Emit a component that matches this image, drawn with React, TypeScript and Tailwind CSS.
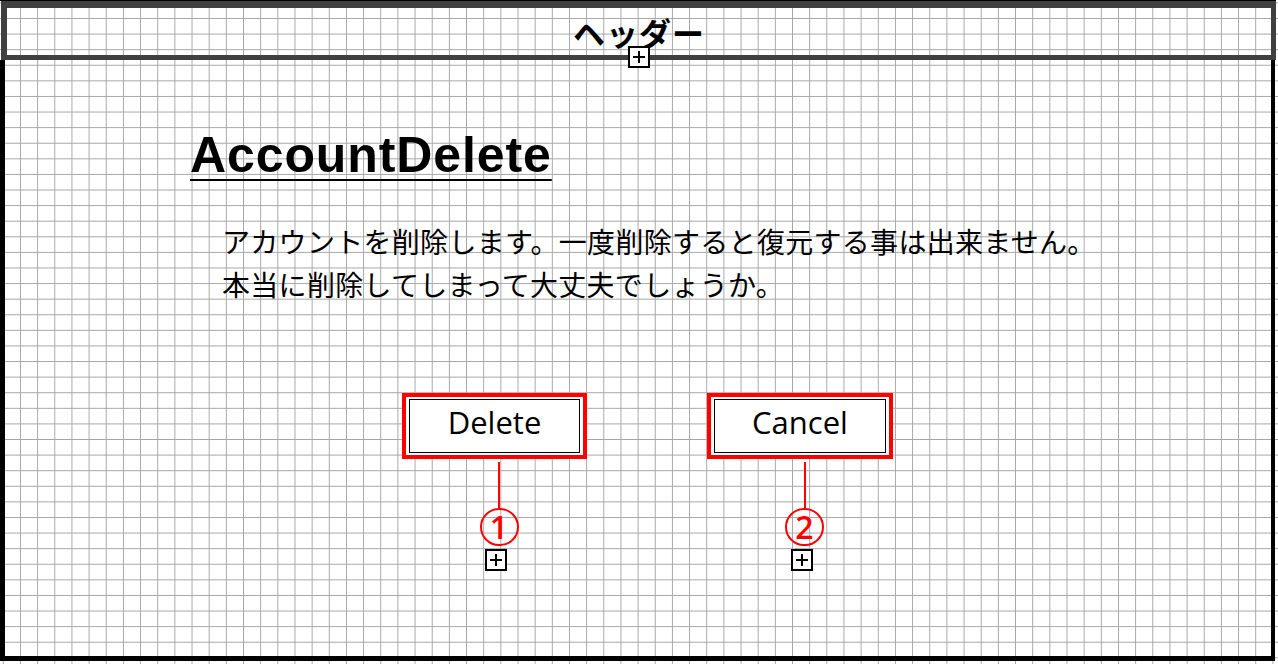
import React from 'react';

const PlusBox: React.FC<{ className?: string }> = ({ className = '' }) => (
  <div className={`w-[22px] h-[22px] border-2 border-black bg-white flex items-center justify-center ${className}`}>
    <svg width="14" height="14" viewBox="0 0 14 14">
      <path d="M7 1v12M1 7h12" stroke="#000" strokeWidth="2" />
    </svg>
  </div>
);

const ActionButton: React.FC<{ label: string; num: string; width: string }> = ({ label, num, width }) => (
  <div className="flex flex-col items-center">
    <div className={`${width} h-[66px] border-4 border-[#ff0000] bg-white px-[3px] py-[2px]`}>
      <div className="h-full border border-black flex items-center justify-center pb-[7px]">
        <span className="text-[31px] text-black font-['Open_Sans',sans-serif]">{label}</span>
      </div>
    </div>
    <div className="flex flex-col items-center ml-[9px]">
      <div className="mt-[3px] w-[2px] h-[46px] bg-[#ff0000]" />
      <div className="w-[39px] h-[38px] rounded-full border-2 border-[#ff0000] flex items-center justify-center">
        <span className="text-[32px] leading-none font-semibold text-[#ff0000] font-['Open_Sans',sans-serif]">{num}</span>
      </div>
    </div>
    <PlusBox className="mt-[3px] ml-[3px]" />
  </div>
);

export default function App() {
  return (
    <div className="relative w-[1278px] h-[664px] overflow-hidden bg-white bg-[linear-gradient(to_right,#a6a6a6_1px,transparent_1px),linear-gradient(to_bottom,#a6a6a6_1px,transparent_1px)] bg-size-[17.167px_15.6px] bg-position-[2.83px_2.4px] font-['Noto_Sans_CJK_JP',sans-serif]">
      <div className="h-px w-[1276px] bg-black" />
      <header className="ml-[1px] w-[1275px] h-[59px] border-t-[7px] border-b-[5px] border-l-[6px] border-r-[5px] border-[#404040] flex items-center justify-center">
        <h1 className="text-[32px] font-bold tracking-[1px] text-black leading-none">ヘッダー</h1>
      </header>
      <PlusBox className="absolute left-[628px] top-[46px]" />

      <main className="w-[1275px] h-[601px] border-l-[5px] border-r-[4px] border-b-[5px] border-black">
        <div className="pl-[185px] pt-[70px]">
          <h2 className="text-[50px] leading-none font-bold tracking-[0.9px] underline decoration-2 underline-offset-[7px] text-black font-['Liberation_Sans',sans-serif]">
            AccountDelete
          </h2>
        </div>
        <div className="pl-[217px] mt-[40px] text-[28px] leading-[43px] tracking-[0.3px] text-black">
          <p>アカウントを削除します。一度削除すると復元する事は出来ません。</p>
          <p>本当に削除してしまって大丈夫でしょうか。</p>
        </div>
        <div className="flex pl-[397px] gap-[120px] mt-[87px]">
          <ActionButton label="Delete" num="1" width="w-[185px]" />
          <ActionButton label="Cancel" num="2" width="w-[186px]" />
        </div>
      </main>
    </div>
  );
}
